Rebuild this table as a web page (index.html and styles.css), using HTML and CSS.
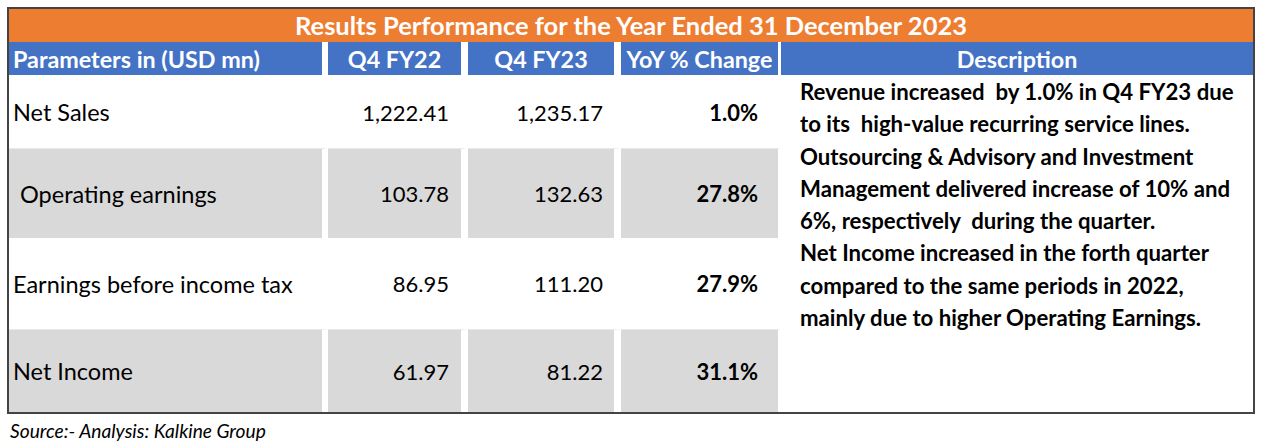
FILE: index.html
```html
<!DOCTYPE html>
<html>
<head>
<meta charset="utf-8">
<link rel="stylesheet" href="styles.css">
</head>
<body>
<div class="sheet">
  <div class="title">Results Performance for the Year Ended 31 December 2023</div>
  <div class="grid">
    <div class="hd hd-param">Parameters in (USD mn)</div>
    <div class="hd hd-n1">Q4 FY22</div>
    <div class="hd hd-n2">Q4 FY23</div>
    <div class="hd hd-pct">YoY % Change</div>
    <div class="hd hd-desc">Description</div>

    <div class="cell param">Net Sales</div>
    <div class="cell num n1">1,222.41</div>
    <div class="cell num n2">1,235.17</div>
    <div class="cell pct">1.0%</div>
    <div class="desc">Revenue increased &nbsp;by 1.0% in Q4 FY23 due<br>to its &nbsp;high-value recurring service lines.<br>Outsourcing &amp; Advisory and Investment<br>Management delivered increase of 10% and<br>6%, respectively &nbsp;during the quarter.<br>Net Income increased in the forth quarter<br>compared to the same periods in 2022,<br>mainly due to higher Operating Earnings.</div>

    <div class="cell param indent grey">Operating earnings</div>
    <div class="cell num n1 grey">103.78</div>
    <div class="cell num n2 grey">132.63</div>
    <div class="cell pct grey">27.8%</div>

    <div class="cell param">Earnings before income tax</div>
    <div class="cell num n1">86.95</div>
    <div class="cell num n2">111.20</div>
    <div class="cell pct">27.9%</div>

    <div class="cell param grey">Net Income</div>
    <div class="cell num n1 grey">61.97</div>
    <div class="cell num n2 grey">81.22</div>
    <div class="cell pct grey">31.1%</div>
  </div>
</div>
<div class="source">Source:- Analysis: Kalkine Group</div>
</body>
</html>
```

FILE: styles.css
```css
html, body {
  margin: 0;
  padding: 0;
  background: #ffffff;
}
body {
  padding: 7px 0 0 7px;
  font-family: Lato, "Open Sans", sans-serif;
  color: #000;
}
.sheet {
  width: 1244px;
  border: 2px solid #444444;
  background: #fff;
}
.title {
  height: 33px;
  background: #ed7d31;
  color: #fff;
  font-weight: bold;
  font-size: 25.5px;
  line-height: 33px;
  text-align: center;
}
.grid {
  display: grid;
  grid-template-columns: 319px 140px 153px 160px 472px;
  grid-template-rows: 34px 72px 90px 91px 83px;
}
.hd {
  background: #4472c4;
  color: #fff;
  font-weight: bold;
  font-size: 23.3px;
  text-align: center;
  line-height: 34px;
  border-bottom: 1px solid #fff;
  white-space: nowrap;
}
.hd-param {
  text-align: left;
  padding-left: 4px;
  border-right: 6px solid #fff;
}
.hd-n1,
.hd-n2 {
  border-right: 7px solid #fff;
}
.hd-pct {
  border-right: 3px solid #fff;
}
.cell {
  display: flex;
  align-items: center;
  font-size: 23.5px;
  white-space: nowrap;
}
.grey {
  background: #d9d9d9;
  border-top: 1px solid #e9e9e9;
}
.param {
  padding-left: 4px;
  border-right: 6px solid #fff;
}
.indent {
  padding-left: 11px;
}
.num {
  justify-content: flex-end;
  border-right: 7px solid #fff;
  font-size: 22px;
}
.n1 {
  padding-right: 12px;
}
.n2 {
  padding-right: 11px;
}
.pct {
  justify-content: flex-end;
  padding-right: 20px;
  border-right: 3px solid #fff;
  font-weight: bold;
  font-size: 22px;
}
.desc {
  grid-column: 5;
  grid-row: 2 / 6;
  padding: 0 0 0 19px;
  font-size: 22.2px;
  font-weight: bold;
  line-height: 32.3px;
  white-space: nowrap;
}
.source {
  margin-top: 5px;
  padding-left: 3px;
  font-style: italic;
  font-size: 19.2px;
  color: #000;
}
```
